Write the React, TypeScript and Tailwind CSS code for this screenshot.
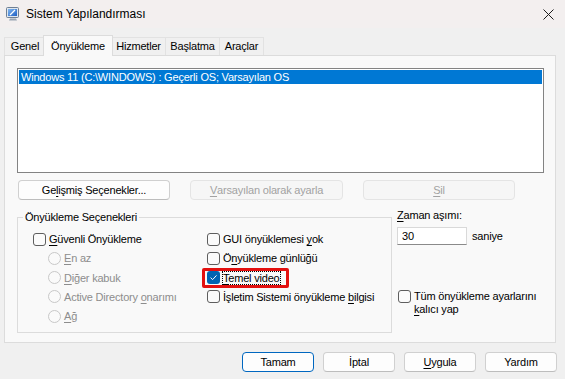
import React from "react";

const U = ({ children }: { children: React.ReactNode }) => (
  <span className="underline decoration-[1px] underline-offset-[2px]">{children}</span>
);

function Check({ checked }: { checked?: boolean }) {
  if (checked) {
    return (
      <span className="flex h-[13px] w-[13px] shrink-0 items-center justify-center rounded-[3px] bg-[#0063b1]">
        <svg width="9" height="9" viewBox="0 0 9 9">
          <path d="M1.6 4.7 L3.6 6.6 L7.5 2.4" fill="none" stroke="#fff" strokeWidth="1" />
        </svg>
      </span>
    );
  }
  return <span className="h-[13px] w-[13px] shrink-0 rounded-[3px] border border-[#5e5e5e] bg-[#fbfbfb]" />;
}

function CheckRow({ children, checked }: { children: React.ReactNode; checked?: boolean }) {
  return (
    <div className="flex h-[19.25px] items-center gap-[3px]">
      <Check checked={checked} />
      <span className="leading-[14px]">{children}</span>
    </div>
  );
}

function RadioRow({ children }: { children: React.ReactNode }) {
  return (
    <div className="flex h-[19.25px] items-center gap-[3px] pl-[15px] text-[#8d8d8d]">
      <span className="h-[13px] w-[13px] shrink-0 rounded-full border border-[#c8c8c8] bg-[#fafafa]" />
      <span className="leading-[14px]">{children}</span>
    </div>
  );
}

function Btn({ children, w, disabled, primary }: { children: React.ReactNode; w: string; disabled?: boolean; primary?: boolean }) {
  return (
    <button
      className={`flex h-[20px] items-center justify-center rounded-[4px] border leading-none ${w} ${
        disabled
          ? "border-[#e4e4e4] bg-[#f6f6f6] text-[#a2a2a2]"
          : primary
          ? "border-[#0067c0] bg-[#fdfdfd] text-black"
          : "border-[#d0d0d0] border-b-[#bdbdbd] bg-[#fdfdfd] text-black"
      }`}
    >
      {children}
    </button>
  );
}

function AppIcon() {
  return (
    <svg width="16" height="16" viewBox="0 0 16 16">
      <defs>
        <linearGradient id="scr" x1="0" y1="0" x2="1" y2="1">
          <stop offset="0" stopColor="#7fb6f0" />
          <stop offset="1" stopColor="#1f5fc4" />
        </linearGradient>
      </defs>
      <rect x="1.5" y="1.5" width="12" height="10" rx="1" fill="#dfe6ee" stroke="#6f7f93" />
      <rect x="3" y="3" width="9" height="7" fill="url(#scr)" />
      <path d="M5 9 L10 4" stroke="#fff" strokeWidth="1.2" />
      <path d="M4 14.5 H12 L11 12.5 H5 Z" fill="#9aa6b4" />
    </svg>
  );
}

const tabs = [
  { label: "Genel", w: "w-[42px]" },
  { label: "Önyükleme", w: "w-[70px]", active: true },
  { label: "Hizmetler", w: "w-[55px]" },
  { label: "Başlatma", w: "w-[55px]" },
  { label: "Araçlar", w: "w-[45px]" },
];

export default function App() {
  return (
    <div className="flex h-[379px] w-[565px] flex-col overflow-hidden bg-[#f0f0f0] font-['Liberation_Sans',Arial,sans-serif] text-[11px] tracking-[-0.2px] text-black">
      {/* title bar */}
      <div className="flex h-[28px] shrink-0 items-center bg-[#f3efef] pl-[5px] pr-[11px]">
        <AppIcon />
        <span className="ml-[5px] text-[12px] tracking-normal">Sistem Yapılandırması</span>
        <div className="flex-1" />
        <svg width="11" height="11" viewBox="0 0 11 11">
          <path d="M0.5 0.5 L10.5 10.5 M10.5 0.5 L0.5 10.5" stroke="#1b1b1b" strokeWidth="1" />
        </svg>
      </div>

      {/* tabs */}
      <div className="mt-[7px] flex h-[20px] shrink-0 items-end pl-[4px]">
        {tabs.map((t) =>
          t.active ? (
            <div
              key={t.label}
              className={`relative z-10 -mx-[2px] -mb-px flex h-[21px] items-start justify-center border border-b-0 border-[#dcdcdc] bg-[#f9f9f9] pt-[2px] ${t.w}`}
            >
              {t.label}
            </div>
          ) : (
            <div
              key={t.label}
              className={`-mr-px flex h-[18px] items-center justify-center border border-b-0 border-[#e2e2e2] bg-[#f0f0f0] ${t.w}`}
            >
              {t.label}
            </div>
          )
        )}
      </div>

      {/* panel */}
      <div className="mx-[4px] mr-[9px] flex h-[288px] shrink-0 flex-col border border-[#dcdcdc] bg-[#f9f9f9] px-[12px] pt-[12px]">
        <div className="h-[105px] w-[527px] border border-[#838383] bg-white p-px">
          <div className="flex h-[14px] items-center bg-[#0078d4] pl-[2px] text-white">
            Windows 11 (C:\WINDOWS) : Geçerli OS; Varsayılan OS
          </div>
        </div>

        <div className="mt-[7px] flex gap-[20px] pl-px">
          <Btn w="w-[152px]">
            Ge<U>l</U>işmiş Seçenekler...
          </Btn>
          <Btn w="w-[153px]" disabled>
            <U>V</U>arsayılan olarak ayarla
          </Btn>
          <Btn w="w-[152px]" disabled>
            <U>S</U>il
          </Btn>
        </div>

        <div className="mt-[8px] flex">
          <fieldset className="mt-[2px] h-[123px] w-[375px] border border-[#dcdcdc] p-0">
            <legend className="ml-[5px] px-[2px] leading-[14px]">Önyükleme Seçenekleri</legend>
            <div className="flex pl-[15px] pt-[5.5px]">
              <div className="w-[174px]">
                <CheckRow>
                  <U>G</U>üvenli Önyükleme
                </CheckRow>
                <RadioRow>
                  <U>E</U>n az
                </RadioRow>
                <RadioRow>
                  <U>D</U>iğer kabuk
                </RadioRow>
                <RadioRow>
                  Active Directory <U>o</U>narımı
                </RadioRow>
                <RadioRow>
                  <U>A</U>ğ
                </RadioRow>
              </div>
              <div>
                <CheckRow>
                  GUI önyüklemesi <U>y</U>ok
                </CheckRow>
                <CheckRow>
                  Ö<U>n</U>yükleme günlüğü
                </CheckRow>
                <div className="relative">
                  <CheckRow checked>
                    <span className="outline outline-1 outline-dotted outline-black">
                      <U>T</U>emel video
                    </span>
                  </CheckRow>
                  <span className="absolute -left-[5px] top-[0px] h-[20px] w-[87px] rounded-[2px] border-[3px] border-[#e3100f]" />
                </div>
                <CheckRow>
                  İşletim Sistemi önyükleme <U>b</U>ilgisi
                </CheckRow>
              </div>
            </div>
          </fieldset>

          <div className="ml-[5px] flex flex-col">
            <span className="leading-[14px]">
              <U>Z</U>aman aşımı:
            </span>
            <div className="mt-[5px] flex items-center">
              <div className="flex h-[18px] w-[70px] items-center border border-[#d9d9d9] border-b-[#8a8a8a] bg-white pl-[4px]">
                30
              </div>
              <span className="ml-[5px]">saniye</span>
            </div>
            <div className="mt-[45px] flex items-start gap-[3px] pl-px">
              <Check />
              <span className="mt-[-0.5px] leading-[13px]">
                Tüm önyükleme ayarlarını
                <br />
                <U>k</U>alıcı yap
              </span>
            </div>
          </div>
        </div>
      </div>

      {/* bottom buttons */}
      <div className="mt-[9px] flex justify-end gap-[9px] pr-[8px]">
        <Btn w="w-[72px]" primary>
          Tamam
        </Btn>
        <Btn w="w-[72px]">İptal</Btn>
        <Btn w="w-[72px]">
          <U>U</U>ygula
        </Btn>
        <Btn w="w-[72px]">Yardım</Btn>
      </div>
    </div>
  );
}
